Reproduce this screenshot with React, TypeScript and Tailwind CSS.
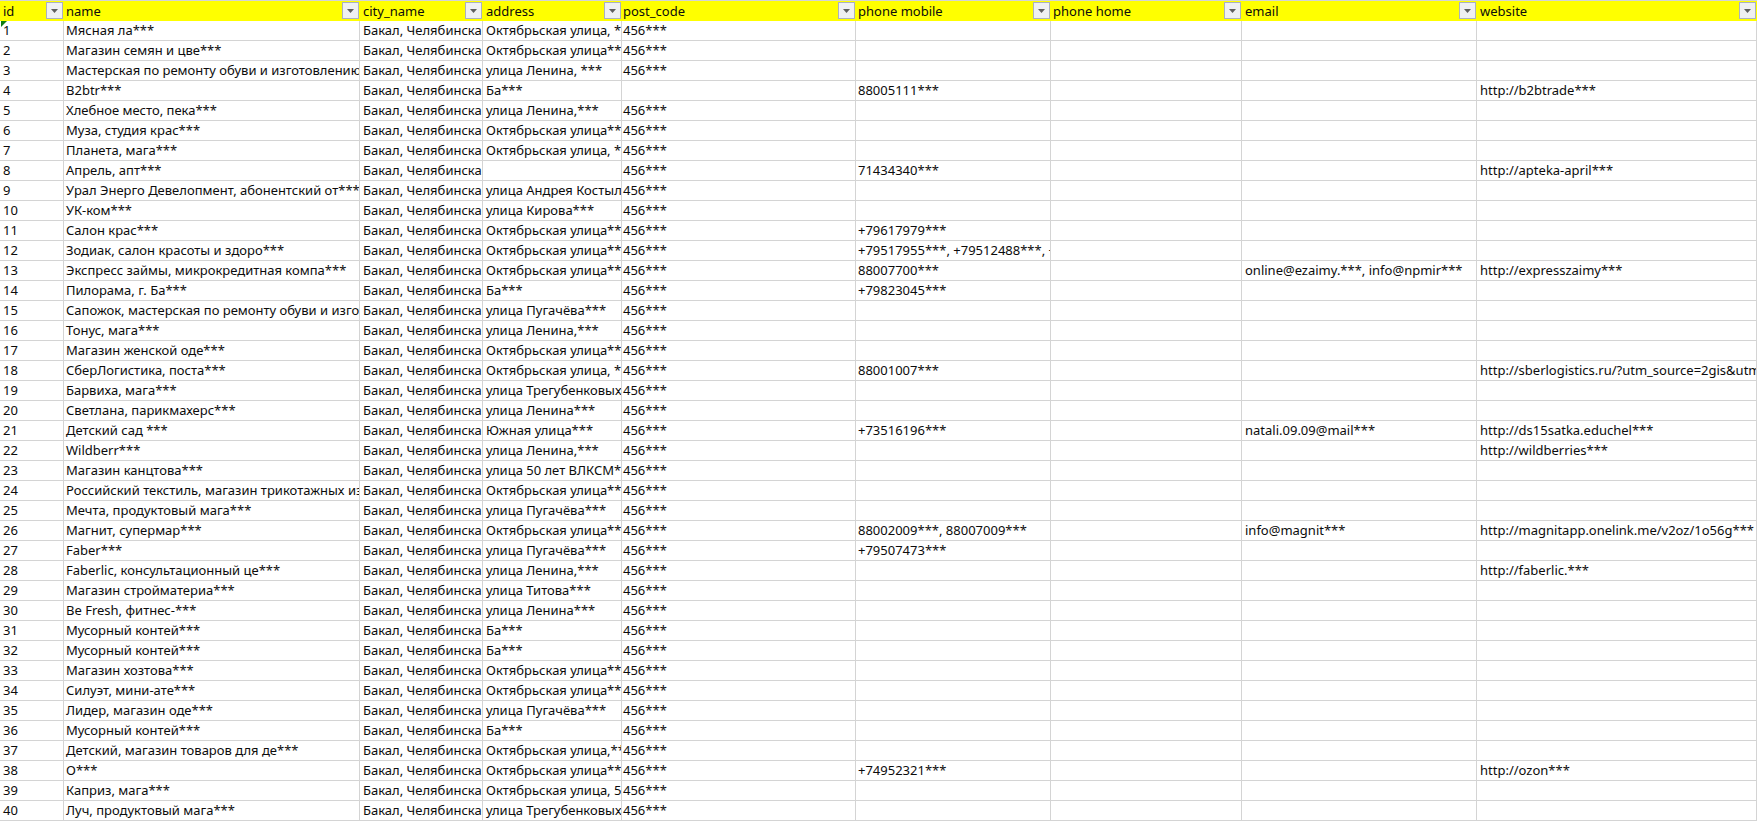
const font = "font-['Noto_Sans',sans-serif] text-[13px]";

const columns = [
  { title: 'id', cls: 'w-[64px] pl-[3px]' },
  { title: 'name', cls: 'w-[296px] pl-[2px]' },
  { title: 'city_name', cls: 'w-[123px] pl-[3px]' },
  { title: 'address', cls: 'w-[139px] pl-[3px]' },
  { title: 'post_code', cls: 'w-[234px] pl-[1px]' },
  { title: 'phone mobile', cls: 'w-[195px] pl-[2px]' },
  { title: 'phone home', cls: 'w-[191px] pl-[2px]' },
  { title: 'email', cls: 'w-[235px] pl-[3px]' },
  { title: 'website', cls: 'w-[280px] pl-[3px]' },
];

const C = 'Бакал, Челябинская';
const P = '456***';
const O1 = 'Октябрьская улица, *';
const O2 = 'Октябрьская улица**';
const L1 = 'улица Ленина,***';
const L2 = 'улица Ленина***';
const PG = 'улица Пугачёва***';
const T = 'улица Трегубенковых';
const BIN = 'Мусорный контей***';

// name, address, post_code, mobile, home, email, website
const rows: string[][] = [
  ['Мясная ла***', O1, P],
  ['Магазин семян и цве***', O2, P],
  ['Мастерская по ремонту обуви и изготовлению', 'улица Ленина, ***', P],
  ['B2btr***', 'Ба***', '', '88005111***', '', '', 'http://b2btrade***'],
  ['Хлебное место, пека***', L1, P],
  ['Муза, студия крас***', O2, P],
  ['Планета, мага***', O1, P],
  ['Апрель, апт***', '', P, '71434340***', '', '', 'http://apteka-april***'],
  ['Урал Энерго Девелопмент, абонентский от***', 'улица Андрея Костылева', P],
  ['УК-ком***', 'улица Кирова***', P],
  ['Салон крас***', O2, P, '+79617979***'],
  ['Зодиак, салон красоты и здоро***', O2, P, '+79517955***, +79512488***, +79'],
  ['Экспресс займы, микрокредитная компа***', O2, P, '88007700***', '', 'online@ezaimy.***, info@npmir***', 'http://expresszaimy***'],
  ['Пилорама, г. Ба***', 'Ба***', P, '+79823045***'],
  ['Сапожок, мастерская по ремонту обуви и изготовлению', PG, P],
  ['Тонус, мага***', L1, P],
  ['Магазин женской оде***', O2, P],
  ['СберЛогистика, поста***', O1, P, '88001007***', '', '', 'http://sberlogistics.ru/?utm_source=2gis&utm'],
  ['Барвиха, мага***', T, P],
  ['Светлана, парикмахерс***', L2, P],
  ['Детский сад ***', 'Южная улица***', P, '+73516196***', '', 'natali.09.09@mail***', 'http://ds15satka.educhel***'],
  ['Wildberr***', L1, P, '', '', '', 'http://wildberries***'],
  ['Магазин канцтова***', 'улица 50 лет ВЛКСМ*', P],
  ['Российский текстиль, магазин трикотажных изделий', O2, P],
  ['Мечта, продуктовый мага***', PG, P],
  ['Магнит, супермар***', O2, P, '88002009***, 88007009***', '', 'info@magnit***', 'http://magnitapp.onelink.me/v2oz/1o56g***'],
  ['Faber***', PG, P, '+79507473***'],
  ['Faberlic, консультационный це***', L1, P, '', '', '', 'http://faberlic.***'],
  ['Магазин стройматериа***', 'улица Титова***', P],
  ['Be Fresh, фитнес-***', L2, P],
  [BIN, 'Ба***', P],
  [BIN, 'Ба***', P],
  ['Магазин хозтова***', O2, P],
  ['Силуэт, мини-ате***', O2, P],
  ['Лидер, магазин оде***', PG, P],
  [BIN, 'Ба***', P],
  ['Детский, магазин товаров для де***', 'Октябрьская улица,***', P],
  ['О***', O2, P, '+74952321***', '', '', 'http://ozon***'],
  ['Каприз, мага***', 'Октябрьская улица, 5', P],
  ['Луч, продуктовый мага***', T, P],
];

function FilterButton() {
  return (
    <div className="absolute right-[1px] top-[1px] flex h-[17px] w-[17px] items-center justify-center border border-[#aab1c0] bg-[#eff0f2]">
      <svg width="7" height="4" viewBox="0 0 7 4"><path d="M0 0h7L3.5 4z" fill="#5f5f5f" /></svg>
    </div>
  );
}

export default function App() {
  return (
    <div className={`relative h-[821px] w-[1757px] overflow-hidden bg-white text-[#0c0c0c] ${font}`}>
      <div className="flex h-[21px] border-t border-[#d4d4d4] bg-[#ffff00]">
        {columns.map((c) => (
          <div key={c.title} className={`relative h-[20px] shrink-0 leading-[20px] ${c.cls}`}>
            {c.title}
            <FilterButton />
          </div>
        ))}
      </div>
      {rows.map((row, r) => {
        const cells = [String(r + 1), row[0], C, row[1], row[2], row[3], row[4], row[5], row[6]];
        return (
          <div key={r} className="flex h-[20px] border-b border-[#d4d4d4]">
            {columns.map((c, i) => (
              <div key={c.title} className={`shrink-0 overflow-hidden whitespace-nowrap border-r border-[#d4d4d4] leading-[19px] ${c.cls}`}>
                {cells[i] ?? ''}
              </div>
            ))}
          </div>
        );
      })}
      {/* excel's green error marker on A2 */}
      <div className="absolute left-[1px] top-[21px] h-0 w-0 border-r-[6px] border-t-[6px] border-r-transparent border-t-[#107c10]" />
    </div>
  );
}
